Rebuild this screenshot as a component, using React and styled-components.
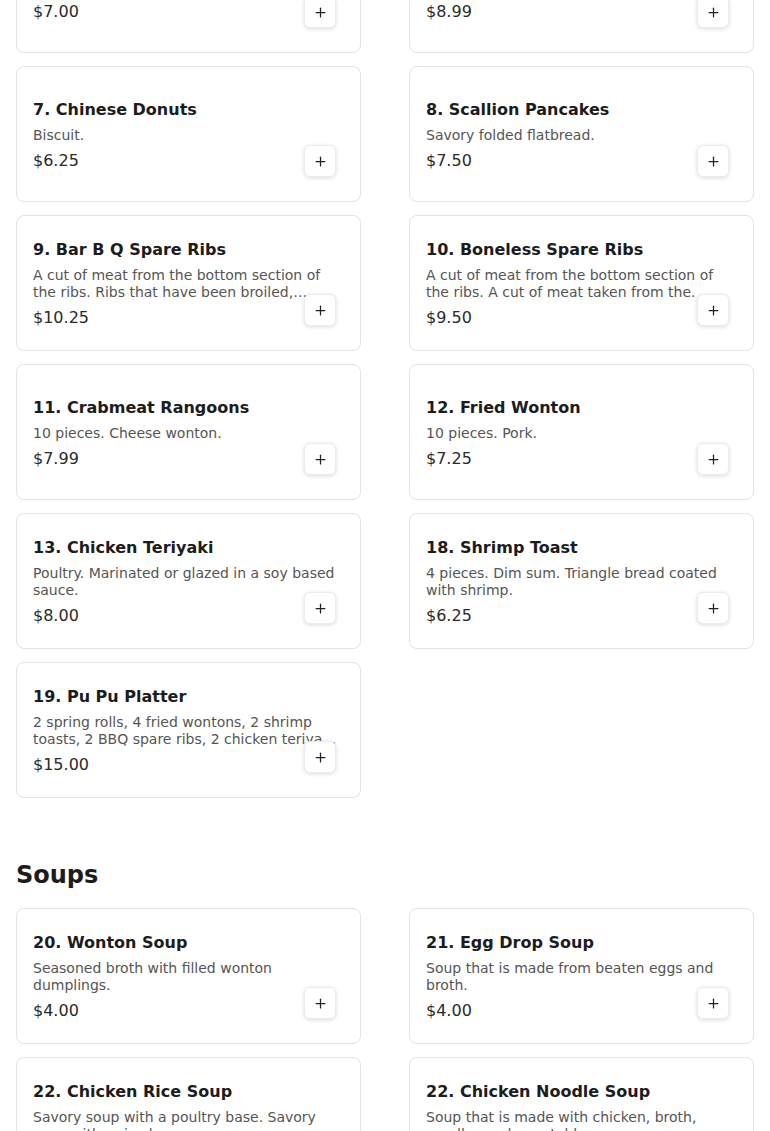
import React from "react";
import styled, { createGlobalStyle } from "styled-components";
import { Plus } from "lucide-react";

const GlobalStyle = createGlobalStyle`
  html, body { margin: 0; padding: 0; background: #ffffff; }
  body { font-family: "DejaVu Sans", "Noto Sans", sans-serif; color: #1c1c1c; }
  * { box-sizing: border-box; }
`;

const Page = styled.main`
  padding: 0 16px;
  margin-top: -83px;
`;

const Section = styled.section`
  & + & { margin-top: 62px; }
`;

const SectionTitle = styled.h2`
  margin: 0 0 18px;
  font-size: 24px;
  line-height: 30px;
  font-weight: 700;
  color: #1c1c1c;
`;

const Grid = styled.div`
  display: grid;
  grid-template-columns: repeat(2, 345px);
  column-gap: 48px;
  row-gap: 13px;
`;

const Card = styled.article`
  position: relative;
  height: 136px;
  border: 1px solid #e3e3e3;
  border-radius: 8px;
  background: #fff;
  padding: 2px 16px 0;
  display: flex;
  flex-direction: column;
  justify-content: center;
  overflow: hidden;
`;

const Name = styled.h3`
  margin: 0 0 7px;
  font-size: 16px;
  line-height: 20px;
  font-weight: 700;
  color: #1c1c1c;
`;

const Desc = styled.p`
  margin: 0;
  font-size: 14px;
  line-height: 17px;
  color: #555;
  display: -webkit-box;
  -webkit-line-clamp: 2;
  -webkit-box-orient: vertical;
  overflow: hidden;
`;

const Price = styled.div`
  margin-top: 7px;
  font-size: 16px;
  line-height: 20px;
  color: #2a2a2a;
`;

const AddButton = styled.button`
  position: absolute;
  right: 24px;
  bottom: 24px;
  width: 32px;
  height: 32px;
  padding: 0;
  border: 1px solid #ececec;
  border-radius: 6px;
  background: #fff;
  box-shadow: 0 1px 4px rgba(0, 0, 0, 0.14);
  display: flex;
  align-items: center;
  justify-content: center;
  color: #222;
  cursor: pointer;
`;

const sections = [
  {
    title: null,
    items: [
      { name: "5. Egg Rolls", desc: "2 pieces. Crispy rolls filled with vegetables.", price: "$7.00" },
      { name: "6. Spring Rolls", desc: "2 pieces.", price: "$8.99" },
      { name: "7. Chinese Donuts", desc: "Biscuit.", price: "$6.25" },
      { name: "8. Scallion Pancakes", desc: "Savory folded flatbread.", price: "$7.50" },
      {
        name: "9. Bar B Q Spare Ribs",
        desc: "A cut of meat from the bottom section of the ribs. Ribs that have been broiled, grilled, or roasted.",
        price: "$10.25",
      },
      {
        name: "10. Boneless Spare Ribs",
        desc: "A cut of meat from the bottom section of the ribs. A cut of meat taken from the.",
        price: "$9.50",
      },
      { name: "11. Crabmeat Rangoons", desc: "10 pieces. Cheese wonton.", price: "$7.99" },
      { name: "12. Fried Wonton", desc: "10 pieces. Pork.", price: "$7.25" },
      { name: "13. Chicken Teriyaki", desc: "Poultry. Marinated or glazed in a soy based sauce.", price: "$8.00" },
      { name: "18. Shrimp Toast", desc: "4 pieces. Dim sum. Triangle bread coated with shrimp.", price: "$6.25" },
      {
        name: "19. Pu Pu Platter",
        desc: "2 spring rolls, 4 fried wontons, 2 shrimp toasts, 2 BBQ spare ribs, 2 chicken teriyaki and 2 crab rangoons.",
        price: "$15.00",
      },
    ],
  },
  {
    title: "Soups",
    items: [
      { name: "20. Wonton Soup", desc: "Seasoned broth with filled wonton dumplings.", price: "$4.00" },
      { name: "21. Egg Drop Soup", desc: "Soup that is made from beaten eggs and broth.", price: "$4.00" },
      {
        name: "22. Chicken Rice Soup",
        desc: "Savory soup with a poultry base. Savory soup with a rice base.",
        price: "$4.00",
      },
      {
        name: "22. Chicken Noodle Soup",
        desc: "Soup that is made with chicken, broth, noodles and vegetables.",
        price: "$4.00",
      },
    ],
  },
];

function MenuCard({ item }) {
  return (
    <Card>
      <Name>{item.name}</Name>
      {item.desc && <Desc>{item.desc}</Desc>}
      <Price>{item.price}</Price>
      <AddButton aria-label={`Add ${item.name}`}>
        <Plus size={15} strokeWidth={2} />
      </AddButton>
    </Card>
  );
}

export default function App() {
  return (
    <>
      <GlobalStyle />
      <Page>
        {sections.map((s, i) => (
          <Section key={i}>
            {s.title && <SectionTitle>{s.title}</SectionTitle>}
            <Grid>
              {s.items.map((item) => (
                <MenuCard key={item.name} item={item} />
              ))}
            </Grid>
          </Section>
        ))}
      </Page>
    </>
  );
}
